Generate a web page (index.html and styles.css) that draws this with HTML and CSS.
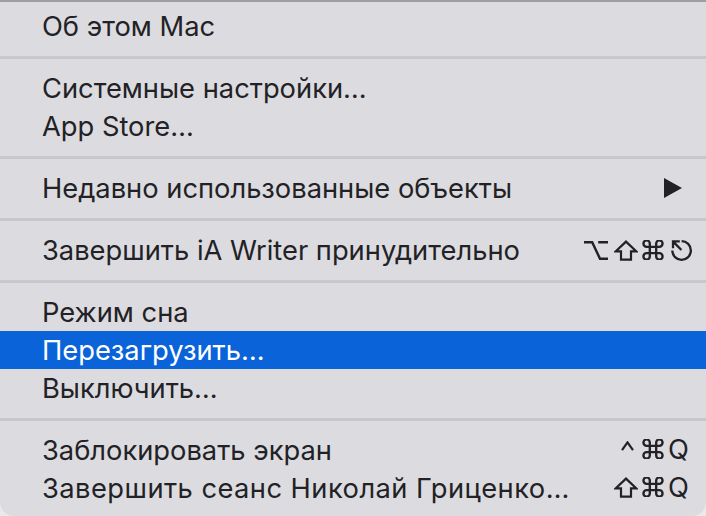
FILE: index.html
```html
<!DOCTYPE html>
<html lang="ru">
<head>
<meta charset="utf-8">
<link rel="stylesheet" href="styles.css">
</head>
<body>
<div class="menu">
  <div class="item"><span class="label">Об этом Mac</span></div>
  <div class="sep"></div>
  <div class="item"><span class="label">Системные настройки…</span></div>
  <div class="item"><span class="label">App Store…</span></div>
  <div class="sep"></div>
  <div class="item"><span class="label">Недавно использованные объекты</span><span class="arrow"></span></div>
  <div class="sep"></div>
  <div class="item">
    <span class="label">Завершить iA Writer принудительно</span>
    <span class="keys">
      <span class="mods">
        <svg class="k-opt" width="24" height="21" viewBox="0 0 24 21"><path d="M0 2.2H8.2L16 18.8H24M14.2 2.2H24"/></svg>
        <svg class="k-shift" width="24" height="21" viewBox="0 0 24 21"><path d="M12 1.6L22.4 11.4H17V19.6H7V11.4H1.6Z"/></svg>
        <svg class="k-cmd" width="22" height="20" viewBox="2.6 2.6 18.8 18.8"><path d="M15 6v12a3 3 0 1 0 3-3H6a3 3 0 1 0 3 3V6a3 3 0 1 0-3 3h12a3 3 0 1 0-3-3"/></svg>
      </span>
      <span class="key">
        <svg class="k-esc" width="23" height="22" viewBox="0 0 23 22"><path d="M2.3 11.5A9.3 9.3 0 1 0 11.6 2.2M3.2 2.6L11.4 11M3 9.2V2.4H9.8"/></svg>
      </span>
    </span>
  </div>
  <div class="sep"></div>
  <div class="item"><span class="label">Режим сна</span></div>
  <div class="item active"><span class="label">Перезагрузить…</span></div>
  <div class="item"><span class="label">Выключить…</span></div>
  <div class="sep"></div>
  <div class="item">
    <span class="label">Заблокировать экран</span>
    <span class="keys">
      <span class="mods">
        <svg class="k-ctrl" width="13" height="10" viewBox="0 0 13 10"><path d="M1 9.2L6.5 1.4L12 9.2"/></svg>
        <svg class="k-cmd" width="22" height="20" viewBox="2.6 2.6 18.8 18.8"><path d="M15 6v12a3 3 0 1 0 3-3H6a3 3 0 1 0 3 3V6a3 3 0 1 0-3 3h12a3 3 0 1 0-3-3"/></svg>
      </span>
      <span class="key">Q</span>
    </span>
  </div>
  <div class="item">
    <span class="label wide">Завершить сеанс Николай Гриценко…</span>
    <span class="keys">
      <span class="mods">
        <svg class="k-shift" width="24" height="21" viewBox="0 0 24 21"><path d="M12 1.6L22.4 11.4H17V19.6H7V11.4H1.6Z"/></svg>
        <svg class="k-cmd" width="22" height="20" viewBox="2.6 2.6 18.8 18.8"><path d="M15 6v12a3 3 0 1 0 3-3H6a3 3 0 1 0 3 3V6a3 3 0 1 0-3 3h12a3 3 0 1 0-3-3"/></svg>
      </span>
      <span class="key">Q</span>
    </span>
  </div>
</div>
</body>
</html>
```
FILE: styles.css
```css
html, body {
  margin: 0;
  padding: 0;
  background: #e9e9eb;
}
body {
  width: 706px;
  height: 516px;
  overflow: hidden;
}
.menu {
  box-sizing: border-box;
  width: 706px;
  height: 516px;
  background: #dcdce0;
  border-top: 2px solid #9c9ca1;
  border-radius: 0 0 14px 14px;
  padding-top: 5px;
  font-family: "Inter", "Noto Sans", sans-serif;
  font-size: 27.3px;
  color: #222226;
  display: flex;
  flex-direction: column;
}
.item {
  height: 38px;
  display: flex;
  align-items: center;
  justify-content: space-between;
  padding: 0 12px 0 42px;
}
.label {
  white-space: nowrap;
}
.label.wide {
  letter-spacing: 0.45px;
}
.item.active {
  background: #0a63d9;
  color: #ffffff;
}
.sep {
  height: 24px;
  display: flex;
  align-items: center;
}
.sep::before {
  content: "";
  display: block;
  width: 100%;
  height: 3px;
  background: #c8c8cc;
}
.arrow {
  width: 0;
  height: 0;
  border-top: 10px solid transparent;
  border-bottom: 10px solid transparent;
  border-left: 18px solid #222226;
  margin-right: 12px;
}
.keys {
  display: flex;
  align-items: center;
  gap: 4px;
}
.mods {
  display: flex;
  align-items: center;
  gap: 4px;
}
.mods svg, .key svg {
  display: block;
  fill: none;
  stroke: #222226;
  stroke-width: 2.4;
}
.k-cmd {
  stroke-width: 2.2 !important;
  margin-top: -1px;
}
.k-opt {
  margin-right: 2px;
  stroke-linecap: butt;
}
.k-shift {
  stroke-width: 2.2 !important;
  stroke-linejoin: miter;
}
.k-ctrl {
  margin-right: 4px;
  margin-top: -7px;
  stroke-width: 2.2 !important;
}
.k-esc {
  margin-left: 2px;
  stroke-width: 2.3 !important;
}
.key {
  width: 26px;
  display: flex;
  align-items: center;
  justify-content: flex-start;
  line-height: 1;
}
```
